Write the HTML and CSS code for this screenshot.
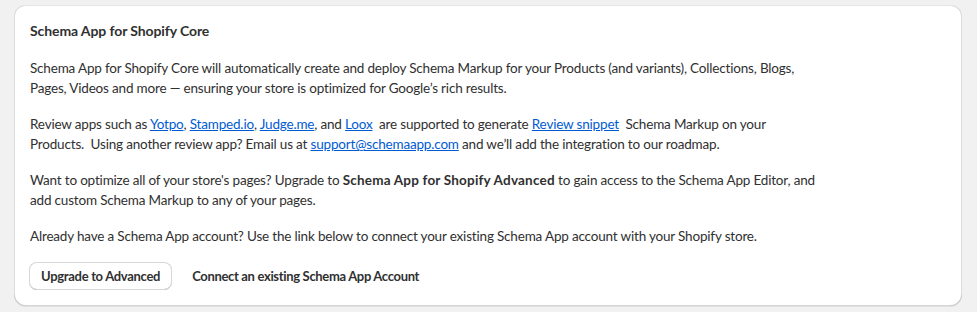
FILE: index.html
```html
<!DOCTYPE html>
<html lang="en">
<head>
<meta charset="utf-8">
<title>Schema App for Shopify Core</title>
<link rel="stylesheet" href="styles.css">
</head>
<body>
<main class="page">
  <section class="card">
    <h2 class="card-title">Schema App for Shopify Core</h2>
    <div class="card-body">
      <p>Schema App for Shopify Core will automatically create and deploy Schema Markup for your Products (and variants), Collections, Blogs, Pages, Videos and more — ensuring your store is optimized for Google’s rich results.</p>
      <p>Review apps such as <a href="#">Yotpo</a>, <a href="#">Stamped.io</a>, <a href="#">Judge.me</a>, and <a href="#">Loox</a>&nbsp; are supported to generate <a href="#">Review snippet</a>&nbsp; Schema Markup on your Products.&nbsp; Using another review app? Email us at <a href="#">support@schemaapp.com</a> and we’ll add the integration to our roadmap.</p>
      <p>Want to optimize all of your store's pages? Upgrade to <strong>Schema App for Shopify Advanced</strong> to gain access to the Schema App Editor, and add custom Schema Markup to any of your pages.</p>
      <p>Already have a Schema App account? Use the link below to connect your existing Schema App account with your Shopify store.</p>
    </div>
    <div class="actions">
      <button class="btn btn-secondary" type="button">Upgrade to Advanced</button>
      <button class="btn btn-plain" type="button">Connect an existing Schema App Account</button>
    </div>
  </section>
</main>
</body>
</html>
```
FILE: styles.css
```css
html, body {
  margin: 0;
  padding: 0;
  background: #f1f1f1;
}
body {
  font-family: "Lato", "Noto Sans", sans-serif;
  font-size: 13.5px;
  line-height: 20px;
  letter-spacing: -0.18px;
  color: #303030;
}
.page {
  padding: 5px 15px 8px 14px;
}
.card {
  background: #ffffff;
  border-radius: 12px;
  padding: 16px;
  box-shadow: 0 1px 0 0 rgba(26, 26, 26, 0.07), 0 1px 0 0 rgba(204, 204, 204, 0.5) inset, 0 -1px 0 0 rgba(0, 0, 0, 0.17) inset, -1px 0 0 0 rgba(0, 0, 0, 0.13) inset, 1px 0 0 0 rgba(0, 0, 0, 0.13) inset;
}
.card-title {
  margin: 0 0 17px;
  font-size: 14px;
  line-height: 20px;
  font-weight: 700;
  letter-spacing: -0.1px;
}
.card-body {
  max-width: 785px;
  display: flex;
  flex-direction: column;
  gap: 16px;
}
.card-body p {
  margin: 0;
}
.card-body a {
  color: #005bd3;
  text-decoration: underline;
}
.card-body strong {
  font-weight: 700;
  letter-spacing: 0.2px;
}
.actions {
  margin-top: 16px;
  display: flex;
  align-items: center;
  gap: 8px;
}
.btn {
  font-family: inherit;
  font-size: 13px;
  font-weight: 700;
  line-height: 16px;
  color: #303030;
  cursor: pointer;
}
.btn-secondary {
  height: 28px;
  padding: 0 12px;
  margin-left: -1px;
  background: #ffffff;
  border: 0;
  border-radius: 8px;
  letter-spacing: -0.3px;
  box-shadow: 0 0 0 1px #d6d6d6 inset, 0 -1px 0 0 #b5b5b5 inset;
}
.btn-plain {
  background: transparent;
  border: 0;
  padding: 0 12px;
  height: 28px;
  letter-spacing: -0.33px;
}
```
